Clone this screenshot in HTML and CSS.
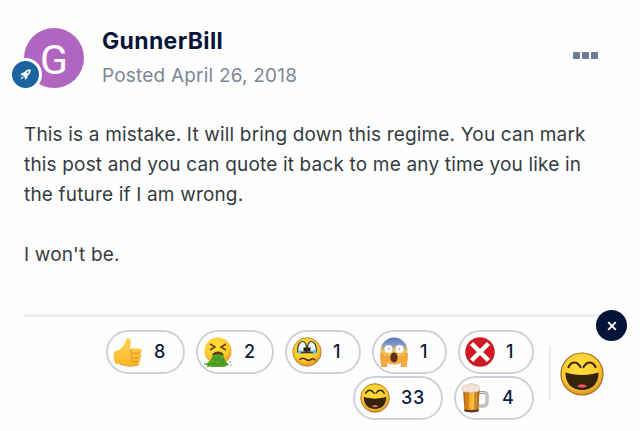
FILE: index.html
```
<!DOCTYPE html>
<html lang="en">
<head>
    <meta charset="UTF-8">
    <meta name="viewport" content="width=device-width, initial-scale=1.0">
    <title>GunnerBill</title>
    <link rel="stylesheet" href="styles.css">
</head>
<body>
    <!-- shared laughing face -->
    <svg class="sprite" aria-hidden="true">
        <defs>
            <radialGradient id="faceFill" cx="45%" cy="35%" r="65%">
                <stop offset="0" stop-color="#ffe13c"/>
                <stop offset=".7" stop-color="#fdc92c"/>
                <stop offset="1" stop-color="#df9427"/>
            </radialGradient>
            <linearGradient id="thumbFill" x1="0" y1="0" x2="0" y2="1">
                <stop offset="0" stop-color="#ffd34b"/>
                <stop offset="1" stop-color="#fbb62b"/>
            </linearGradient>
            <linearGradient id="screamFill" x1="0" y1="0" x2="0" y2="1">
                <stop offset="0" stop-color="#5876c5"/>
                <stop offset=".28" stop-color="#879ac0"/>
                <stop offset=".52" stop-color="#f4c45d"/>
                <stop offset="1" stop-color="#f4a638"/>
            </linearGradient>
            <linearGradient id="beerFill" x1="0" y1="0" x2="1" y2="0">
                <stop offset="0" stop-color="#a8560e"/>
                <stop offset=".35" stop-color="#f2a421"/>
                <stop offset=".65" stop-color="#ffc547"/>
                <stop offset="1" stop-color="#9f4e10"/>
            </linearGradient>
            <symbol id="laugh" viewBox="0 0 44 44">
                <circle cx="22" cy="22" r="21" fill="url(#faceFill)" stroke="#9a6c22" stroke-width="1.2"/>
                <path d="M8.500 15c3-6 8.500-6 12 0M23.500 15c3.500-6 9-6 12 0" fill="none" stroke="#3c2b0b" stroke-width="2.200" stroke-linecap="round"/>
                <path d="M5.500 20.500c1.500 0 3 .9 5 1.300 8 1.600 15 1.600 23 0 2-.4 3.500-1.300 5-1.300C38.800 31.500 32 38 22 38S5.200 31.500 5.500 20.500z" fill="#35230c"/>
                <path d="M17 34.500c2.500-3 7.500-3 10 0-3 1.500-7 1.500-10 0z" fill="#ed5965"/>
            </symbol>
        </defs>
    </svg>

    <article class="post">
        <header class="post-header">
            <div class="avatar">
                <span class="avatar-letter">G</span>
                <span class="rank">
                    <svg viewBox="0 0 16 16" width="13" height="13">
                        <path d="M14.500 1.500c-4 0-6.500 1.500-8.300 4L3.500 6 1.600 9l2.700-.3 3 3L7 14.400l3-1.900.5-2.700c2.500-1.800 4-4.300 4-8.300z" fill="#fff"/>
                        <circle cx="10.800" cy="5.200" r="1.300" fill="#1c64a0"/>
                        <path d="M4.200 10.200L1.500 14.500l4.300-2.700z" fill="#fff"/>
                    </svg>
                </span>
            </div>
            <div class="byline">
                <h3 class="author">GunnerBill</h3>
                <div class="date">Posted April 26, 2018</div>
            </div>
            <div class="more"><i></i><i></i><i></i></div>
        </header>

        <div class="post-body">
            <p>This is a mistake. It will bring down this regime. You can mark<br>this post and you can quote it back to me any time you like in<br>the future if I am wrong.</p>
            <p>I won't be.</p>
        </div>

        <footer class="post-footer">
            <span class="close">
                <svg viewBox="0 0 10 10" width="10" height="10"><path d="M1.200 1.200l7.600 7.600M8.800 1.200L1.200 8.800" stroke="#fff" stroke-width="1.900"/></svg>
            </span>
            <div class="reactions">
                <div class="reaction like">
                    <svg viewBox="0 0 30 30">
                        <path d="M1 15c2.500-1.500 5-1.500 7-3.500 3-3 4.500-5.500 5-9C13.400.2 17 .3 17.600 3.500c.5 3-.5 6-.9 8h9.500c3.300 0 3.300 4.500.6 4.800 2.500.8 2 4.200-.4 4.500 2 1 1.300 4-.9 4.100 1.500 1.300.3 3.700-1.600 3.900-5.500.7-11.400.8-15-.8-2-.9-4-1.300-6.300-1.300C.4 23 .3 18.500 1 15z" fill="url(#thumbFill)"/>
                        <path d="M26.800 16.300h-7.300M26.400 20.800h-7M25.500 24.900h-6M18.500 12.500c-1.500 1-1.500 3.200.6 3.900-1.900 1-1.600 3.600.4 4.400-1.600 1-1.100 3.300.6 4.100" fill="none" stroke="#d98b1d" stroke-width="1"/>
                        <path d="M7 27c5 2 12 2.500 17 1.500" fill="none" stroke="#e39a20" stroke-width="1"/>
                    </svg>
                    <span>8</span>
                </div>
                <div class="reaction sick">
                    <svg viewBox="0 0 30 30">
                        <circle cx="15" cy="14" r="13.500" fill="url(#faceFill)"/>
                        <path d="M7 7l5 3-5 3M23 7l-5 3 5 3" fill="none" stroke="#70420e" stroke-width="1.700"/>
                        <path d="M9.500 19c0-3 2-4.500 5.500-4.500s5.500 1.500 5.500 4.500l1.500 4.500 4 4-5 2.500H8l-6-2.500 5.500-4z" fill="#55a327"/>
                        <path d="M9.300 18.500c.5-5 10.900-5 11.400 0-3-1.700-8.400-1.700-11.400 0z" fill="#66340d"/>
                        <path d="M9 23l3-3 1 4 3-5 1 5 3-2 1 4M5 28l6-2 4 2 5-2 5 2" fill="none" stroke="#348a1c" stroke-width="1" stroke-dasharray="2 1.200"/>
                        <path d="M1 27h1M27 25h1M27.500 28.500h1M4 29.500h2" stroke="#55a327" stroke-width="1.300"/>
                    </svg>
                    <span>2</span>
                </div>
                <div class="reaction worried">
                    <svg viewBox="0 0 30 30">
                        <circle cx="15" cy="15" r="14.200" fill="url(#faceFill)" stroke="#ad7a28" stroke-width=".8"/>
                        <path d="M5.500 15C5.500 8 7.500 4.500 11 4.500c2.500 0 3.700 3 3.700 10.500zM15.300 15c0-7.500 1.200-10.500 3.700-10.500 3.500 0 5.500 3.500 5.500 10.500z" fill="#eefaff" stroke="#343126" stroke-width="1.200"/>
                        <path d="M5.500 13h3.500v4H6.500zM21 13h3.500l-1 4H21z" fill="#5dcaf0"/>
                        <path d="M11.500 10.500h2.500v4h-2.500zM16 10.500h2.500v4H16z" fill="#222"/>
                        <path d="M9 15.700h12" stroke="#343126" stroke-width="1.200"/>
                        <path d="M8 22.500c2-2.500 4-1 6 0 2 1.300 3.500 1 5 0 1.500-1.200 2.700-1 4 .5" fill="none" stroke="#4a310a" stroke-width="1.600" stroke-linecap="round"/>
                    </svg>
                    <span>1</span>
                </div>
                <div class="reaction scream">
                    <svg viewBox="0 0 30 30">
                        <circle cx="15" cy="14" r="13.500" fill="url(#screamFill)"/>
                        <circle cx="9.500" cy="12" r="4" fill="#fff"/>
                        <circle cx="20.500" cy="12" r="4" fill="#fff"/>
                        <circle cx="9.800" cy="12" r="1.100" fill="#b9b5ad"/>
                        <circle cx="20.200" cy="12" r="1.100" fill="#b9b5ad"/>
                        <ellipse cx="15" cy="20.500" rx="3.700" ry="5" fill="#5e301b"/>
                        <path d="M1.500 17c1-1.500 2.200-1 2.700.4l1.300 3.300 2-1.700c1.500-.7 2.500.8 2 2.200-.8 2-1.700 3-1.700 5V30H2.500c.4-4-1.700-7.500-1-13zM28.500 17c-1-1.500-2.200-1-2.700.4l-1.300 3.300-2-1.700c-1.500-.7-2.500.8-2 2.200.8 2 1.700 3 1.700 5V30h5.300c-.4-4 1.700-7.500 1-13z" fill="#f5a93e" stroke="#e0902f" stroke-width=".5"/>
                    </svg>
                    <span>1</span>
                </div>
                <div class="reaction wrong">
                    <svg viewBox="0 0 30 30">
                        <circle cx="15" cy="15" r="14.700" fill="#d01a20"/>
                        <path d="M6.500 6.500l17 17M23.500 6.500l-17 17" stroke="#fff" stroke-width="4.500"/>
                    </svg>
                    <span>1</span>
                </div>
                <div class="reaction haha">
                    <svg><use href="#laugh"/></svg>
                    <span>33</span>
                </div>
                <div class="reaction beer">
                    <svg viewBox="0 0 30 30">
                        <path d="M18 9.500h5c2.500 0 3 1 3 3v6c0 3-1.500 4.500-4 4.500h-4" fill="none" stroke="#a39e94" stroke-width="3"/>
                        <path d="M18 9.500h5c2.500 0 3 1 3 3v6c0 3-1.500 4.500-4 4.500h-4" fill="none" stroke="#e0ddd6" stroke-width="1.200"/>
                        <path d="M2 6h16.500l-1 22c-3 1.500-11 1.500-14 0z" fill="url(#beerFill)"/>
                        <path d="M7 9v17M14 9v17" stroke="#b86a12" stroke-width="1"/>
                        <path d="M3.400 26c4 1.200 10 1.200 14.200 0l-.1 2.300c-3 1.500-11 1.500-14 0z" fill="#5a3720"/>
                        <path d="M1 6.500C.5 3 4 1.500 6.500 2 8 .3 12 .2 13.500 1.500c3-.3 5.500 1.500 5 5.500-2 3-4 1-6 2.300C9 10 8 8.500 6 9 3 9.500 1.500 8.500 1 6.500z" fill="#efe3d6" stroke="#cdb9a5" stroke-width=".6"/>
                    </svg>
                    <span>4</span>
                </div>
            </div>
            <div class="own-reaction">
                <svg><use href="#laugh"/></svg>
            </div>
        </footer>
    </article>
</body>
</html>
```
FILE: styles.css
```
* {
    box-sizing: border-box;
}
body {
    margin: 0;
    background-color: #fefefe;
    font-family: Inter, sans-serif;
    color: #353c41;
}
.sprite {
    position: absolute;
    width: 0;
    height: 0;
}
.post {
    width: 640px;
    height: 431px;
    padding: 28px 14px 0 24px;
    overflow: hidden;
}
.post-header {
    display: flex;
    height: 92px;
}
.avatar {
    position: relative;
    display: flex;
    justify-content: center;
    align-items: center;
    width: 60px;
    height: 60px;
    border-radius: 50%;
    background-color: #b065c1;
}
.avatar-letter {
    padding-top: 3px;
    color: #fff;
    font-family: Roboto, sans-serif;
    font-size: 41px;
    line-height: 60px;
}
.rank {
    position: absolute;
    left: -15px;
    top: 30px;
    display: flex;
    justify-content: center;
    align-items: center;
    width: 33px;
    height: 33px;
    border: 3px solid #fefefe;
    border-radius: 50%;
    background-color: #1c64a0;
}
.byline {
    flex: 1;
    padding-left: 18px;
}
.author {
    margin: 0;
    font-size: 23px;
    line-height: 26px;
    font-weight: 700;
    letter-spacing: 0.35px;
    color: #051438;
}
.date {
    margin-top: 8px;
    font-size: 19px;
    line-height: 28px;
    letter-spacing: 0.2px;
    color: #7d8797;
}
.more {
    display: flex;
    gap: 2px;
    padding: 24px 28px 0 0;
}
.more i {
    width: 7px;
    height: 7px;
    border-radius: 1px;
    background-color: #6d7d96;
}
.post-body {
    height: 194px;
    font-size: 19px;
    line-height: 30px;
    letter-spacing: 0.17px;
    white-space: nowrap;
}
.post-body p {
    margin: 0 0 30px;
}
.post-footer {
    position: relative;
    display: flex;
    width: 590px;
    padding-top: 13px;
    border-top: 3px solid #ededef;
}
.close {
    position: absolute;
    right: -13px;
    top: -7px;
    display: flex;
    justify-content: center;
    align-items: center;
    width: 31px;
    height: 31px;
    border-radius: 50%;
    background-color: #031438;
}
.reactions {
    display: flex;
    flex-wrap: wrap;
    justify-content: flex-end;
    gap: 2px 11px;
    width: 510px;
}
.reaction {
    display: flex;
    align-items: center;
    height: 44px;
    padding-left: 5px;
    border: 2px solid #ccd1da;
    border-radius: 22px;
    font-size: 18px;
    font-weight: 500;
    letter-spacing: 0.6px;
    color: #0b1b3d;
}
.reaction svg {
    width: 30px;
    height: 30px;
    margin-right: 11px;
}
.reaction span {
    position: relative;
    top: -1px;
}
.like {
    width: 79px;
}
.sick {
    width: 78px;
}
.worried {
    width: 76px;
}
.scream {
    width: 75px;
}
.wrong {
    width: 76px;
}
.haha {
    width: 90px;
}
.beer {
    width: 80px;
}
.own-reaction {
    display: flex;
    align-items: center;
    height: 55px;
    margin: 16px 0 0 15px;
    padding-left: 9px;
    border-left: 2px solid #ececee;
}
.own-reaction svg {
    width: 44px;
    height: 44px;
}
```
